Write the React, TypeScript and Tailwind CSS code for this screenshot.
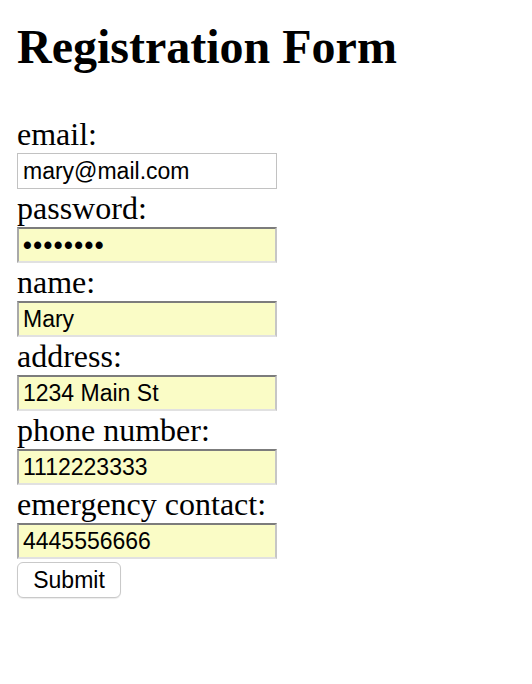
import React from "react";

const serif = { fontFamily: '"Liberation Serif", "Times New Roman", serif' };
const sans = { fontFamily: '"Liberation Sans", Arial, Helvetica, sans-serif' };

function Field({ label, value, plain, dots }: { label: string; value: string; plain?: boolean; dots?: boolean }) {
  return (
    <div className="flex flex-col">
      <label className="block h-[38px] text-[32px] leading-[38px] text-black" style={serif}>
        {label}
      </label>
      <input
        readOnly
        value={value}
        className={
          plain
            ? "block h-[36px] w-[260px] border border-[#c2c2c2] bg-white pl-[5px] pt-[1px] text-[23px] text-black outline-none"
            : "block h-[36px] w-[260px] border-2 border-t-[#7c7c7c] border-l-[#a9a9a9] border-r-[#c6c6c6] border-b-[#e1e1e1] bg-[#fafcc6] pl-[4px] pt-[1px] text-black outline-none" +
              (dots ? " text-[25px] font-bold tracking-[1.5px]" : " text-[23px]")
        }
        style={sans}
      />
    </div>
  );
}

export default function App() {
  return (
    <div className="min-h-[684px] bg-white pl-[17px] pt-[19px]">
      <h1 className="mb-[41px] text-[48px] font-bold leading-[55px] text-black" style={serif}>
        Registration Form
      </h1>
      <div className="flex flex-col">
        <Field label="email:" value="mary@mail.com" plain />
        <Field label="password:" value="••••••••" dots />
        <Field label="name:" value="Mary" />
        <Field label="address:" value="1234 Main St" />
        <Field label="phone number:" value="1112223333" />
        <Field label="emergency contact:" value="4445556666" />
        <div className="pt-[3px]">
          <button
            className="h-[36px] w-[104px] rounded-[6px] border border-[#c9c9c9] bg-white text-[23px] text-black shadow-[0_1px_1px_rgba(0,0,0,0.08)]"
            style={sans}
          >
            Submit
          </button>
        </div>
      </div>
    </div>
  );
}
